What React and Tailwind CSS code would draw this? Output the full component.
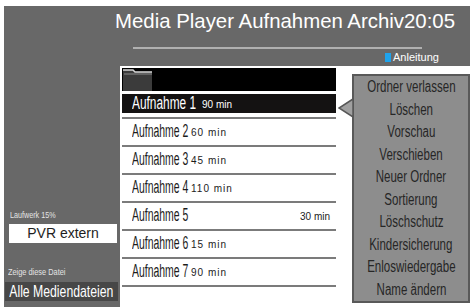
import React from 'react';

const recordings = [
  { name: 'Aufnahme 1', len: '90 min' },
  { name: 'Aufnahme 2', len: '60 min' },
  { name: 'Aufnahme 3', len: '45 min' },
  { name: 'Aufnahme 4', len: '110 min' },
  { name: 'Aufnahme 5', len: '30 min', right: true },
  { name: 'Aufnahme 6', len: '15 min' },
  { name: 'Aufnahme 7', len: '90 min' },
];

const menuItems = [
  'Ordner verlassen',
  'Löschen',
  'Vorschau',
  'Verschieben',
  'Neuer Ordner',
  'Sortierung',
  'Löschschutz',
  'Kindersicherung',
  'Enloswiedergabe',
  'Name ändern',
];

function FolderIcon() {
  return (
    <svg width="31" height="23" viewBox="0 0 31 23" className="block">
      <rect x="0" y="0" width="31" height="23" fill="#000" />
      <path d="M1 2 H11 L13 4 H30 V23 H1 Z" fill="#3b3b3b" />
      <path d="M1 2 H11 L13 4 H30" fill="none" stroke="#d8d8d8" strokeWidth="1.5" />
      <path d="M2 6 H30" stroke="#8a8a8a" strokeWidth="1" />
    </svg>
  );
}

function Row({ item, active }) {
  return (
    <div className="h-[28px] border-b-2 border-[#7b7b7b] pt-[3px]">
      <div
        className={`h-[19px] flex items-center pl-[10px] pr-[6px] whitespace-nowrap ${
          active ? 'bg-[#141212] text-white' : 'text-[#1c1c1c]'
        }`}
      >
        <span className={`inline-block ${active ? 'w-[70px]' : 'w-[59px]'}`}>
          <span
            className={`inline-block origin-left text-[18px] leading-none ${
              active ? 'scale-x-[0.66]' : 'scale-x-[0.58]'
            }`}
          >
            {item.name}
          </span>
        </span>
        {item.right ? (
          <span className="ml-auto text-[10px] leading-none pt-[3px]">{item.len}</span>
        ) : (
          <span
            className={`text-[10px] leading-none pt-[3px] ${
              active ? 'tracking-[0px]' : 'tracking-[1px]'
            }`}
          >
            {item.len}
          </span>
        )}
      </div>
    </div>
  );
}

export default function App() {
  return (
    <div
      className="w-[473px] h-[307px] bg-white overflow-hidden pt-[6px] pl-[4px] flex flex-col"
      style={{ fontFamily: '"Liberation Sans", Arial, sans-serif' }}
    >
      {/* header */}
      <div className="h-[60px] w-[466px] bg-[#686868] shrink-0">
        <div className="pl-[111px] pt-[3px] text-white text-[20.4px] leading-[24px] whitespace-nowrap">
          Media Player Aufnahmen Archiv20:05
        </div>
        <div className="ml-[129px] mt-[14px] w-[289px] h-[2px] bg-[#b0b0b0]" />
        <div className="ml-[381px] mt-[3px] flex items-center gap-[2px]">
          <span className="w-[6px] h-[9px] bg-[#1ea3ec]" />
          <span className="text-white text-[11px] leading-[10px]">Anleitung</span>
        </div>
      </div>

      <div className="flex flex-1">
        {/* left column */}
        <div className="w-[116px] bg-[#686868] flex flex-col justify-end pb-[6px]">
          <div className="pl-[6px] mb-[4px] text-[#e4e4e4] text-[9px] leading-[10px] whitespace-nowrap">
            <span className="inline-block origin-left scale-x-[0.8]">Laufwerk 15%</span>
          </div>
          <div className="ml-[5px] mr-[3px] h-[19px] bg-white flex items-center justify-center text-[#1e1e1e] text-[14px]">
            PVR extern
          </div>
          <div className="pl-[4px] mt-[23px] mb-[4px] text-[#e4e4e4] text-[9px] leading-[12px] whitespace-nowrap">
            <span className="inline-block origin-left scale-x-[0.82]">Zeige diese Datei</span>
          </div>
          <div className="ml-[1px] mr-[2px] h-[19px] bg-[#474747] flex items-center justify-center text-white whitespace-nowrap">
            <span className="inline-block scale-x-[0.72] text-[17px] leading-none">Alle Mediendateien</span>
          </div>
        </div>

        {/* recordings list */}
        <div className="ml-[2px] mt-[2px] w-[214px]">
          <div className="h-[23px] bg-black flex">
            <FolderIcon />
          </div>
          {recordings.map((r, i) => (
            <Row key={r.name} item={r} active={i === 0} />
          ))}
        </div>

        {/* options menu */}
        <div className="relative ml-[16px] mt-[8px] w-[118px] h-[229px] bg-[#8d8d8d] border-2 border-[#595959] flex flex-col">
          <svg
            width="16"
            height="20"
            viewBox="0 0 16 20"
            className="absolute left-[-16px] top-[22px]"
          >
            <path d="M15 1 L1 10 L15 19 Z" fill="#a0a0a0" stroke="#575757" strokeWidth="1.5" />
          </svg>
          {menuItems.map((m) => (
            <div
              key={m}
              className="h-[22.5px] flex items-center justify-center text-[#262626] whitespace-nowrap"
            >
              <span className="inline-block scale-x-[0.72] text-[16px] leading-none">{m}</span>
            </div>
          ))}
        </div>
      </div>
    </div>
  );
}
